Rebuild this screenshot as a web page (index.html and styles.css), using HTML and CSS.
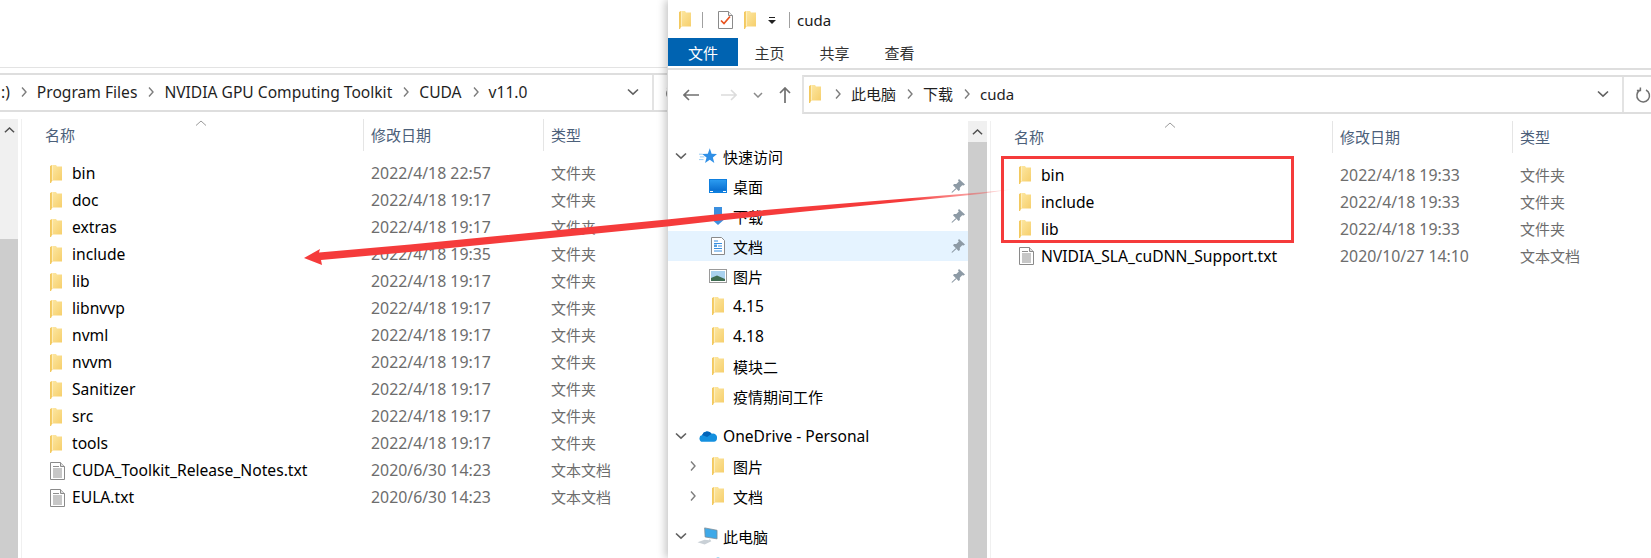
FILE: index.html
```html
<!DOCTYPE html>
<html lang="zh-CN">
<head>
<meta charset="utf-8">
<title>cuda</title>
<link rel="stylesheet" href="styles.css">
</head>
<body>
<svg class="sprite" aria-hidden="true">
  <defs>
    <linearGradient id="fg" x1="0" y1="0" x2="1" y2="1"><stop offset="0" stop-color="#fde8a4"/><stop offset="1" stop-color="#f6cf6c"/></linearGradient>
    <linearGradient id="sky" x1="0" y1="0" x2="0" y2="1"><stop offset="0" stop-color="#2b9bf0"/><stop offset="1" stop-color="#0a6fd0"/></linearGradient>
    <symbol id="folder" viewBox="0 0 12 18">
      <path d="M1.500 0H6L7 1.500H12V15.500H1.500Z" fill="url(#fg)"/>
      <path d="M0 1L2.200 0V15.500L1 18H0Z" fill="#f3c95f"/>
      <path d="M2.400 .2V15.300" stroke="#fff5d0" stroke-width=".8"/>
    </symbol>
    <symbol id="txt" viewBox="0 0 15 18">
      <path d="M.5.5H10.500L14.500 4.500V17.500H.5Z" fill="#fff" stroke="#8a8a8a"/>
      <path d="M10.500.5V4.500H14.500" fill="#ddd" stroke="#8a8a8a"/>
      <path d="M3 4.500H9M3 7H12M3 9H12M3 11H12M3 13H12M3 15H12" stroke="#8f8f8f"/>
    </symbol>
    <symbol id="chev-r" viewBox="0 0 8 12"><path d="M2 1.500L6 6L2 10.500" fill="none" stroke="#7d7d7d" stroke-width="1.400"/></symbol>
    <symbol id="chev-d" viewBox="0 0 12 8"><path d="M1 1.500L6 6.200L11 1.500" fill="none" stroke="#606060" stroke-width="1.600"/></symbol>
    <symbol id="chev-u" viewBox="0 0 12 8"><path d="M1 6.500L6 1.800L11 6.500" fill="none" stroke="#505050" stroke-width="1.600"/></symbol>
    <symbol id="refresh" viewBox="0 0 16 16"><path d="M5 3.200A6.300 6.300 0 1 0 11 3M5.400 .6V3.600H1.900" fill="none" stroke="#707070" stroke-width="1.500"/></symbol>
    <symbol id="pin" viewBox="0 0 14 14"><path d="M8 0L14 5.500L12.600 6.600L11.200 6.200L8.800 8.800L8.900 11L7.600 12L2 6.200L3.100 5L5.300 5L7.800 2.600L7 1.200ZM4.600 9.200L5.400 10L1.200 13.800L.4 13.200Z" fill="#8d9aa5"/></symbol>
  </defs>
</svg>

<main class="stage">
  <section class="win win-left">
    <div class="top-blank"></div>
    <div class="address">
      <div class="crumbs crumbs-cut">
        <span class="lat">:)</span><svg class="chev"><use href="#chev-r"/></svg>
        <span class="lat">Program Files</span><svg class="chev"><use href="#chev-r"/></svg>
        <span class="lat">NVIDIA GPU Computing Toolkit</span><svg class="chev"><use href="#chev-r"/></svg>
        <span class="lat">CUDA</span><svg class="chev"><use href="#chev-r"/></svg>
        <span class="lat">v11.0</span>
        <svg class="drop"><use href="#chev-d"/></svg>
      </div>
      <div class="refresh refresh-cut"><svg class="refresh-ic"><use href="#refresh"/></svg></div>
    </div>
    <div class="body body-left">
      <div class="scroll scroll-left"><div class="scroll-head scroll-head-left"><svg class="sc-up"><use href="#chev-u"/></svg></div><div class="thumb"></div></div>
      <div class="list">
        <div class="head"><div class="hc hc-name">名称<svg class="sort" viewBox="0 0 12 6"><path d="M1 5.500L6 1L11 5.500" fill="none" stroke="#9a9a9a"/></svg></div><div class="hc">修改日期</div><div class="hc">类型</div></div>
        <div class="row"><div class="name"><svg class="ic-folder"><use href="#folder"/></svg>bin</div><div class="meta">2022/4/18 22:57</div><div class="meta">文件夹</div></div>
        <div class="row"><div class="name"><svg class="ic-folder"><use href="#folder"/></svg>doc</div><div class="meta">2022/4/18 19:17</div><div class="meta">文件夹</div></div>
        <div class="row"><div class="name"><svg class="ic-folder"><use href="#folder"/></svg>extras</div><div class="meta">2022/4/18 19:17</div><div class="meta">文件夹</div></div>
        <div class="row"><div class="name"><svg class="ic-folder"><use href="#folder"/></svg>include</div><div class="meta">2022/4/18 19:35</div><div class="meta">文件夹</div></div>
        <div class="row"><div class="name"><svg class="ic-folder"><use href="#folder"/></svg>lib</div><div class="meta">2022/4/18 19:17</div><div class="meta">文件夹</div></div>
        <div class="row"><div class="name"><svg class="ic-folder"><use href="#folder"/></svg>libnvvp</div><div class="meta">2022/4/18 19:17</div><div class="meta">文件夹</div></div>
        <div class="row"><div class="name"><svg class="ic-folder"><use href="#folder"/></svg>nvml</div><div class="meta">2022/4/18 19:17</div><div class="meta">文件夹</div></div>
        <div class="row"><div class="name"><svg class="ic-folder"><use href="#folder"/></svg>nvvm</div><div class="meta">2022/4/18 19:17</div><div class="meta">文件夹</div></div>
        <div class="row"><div class="name"><svg class="ic-folder"><use href="#folder"/></svg>Sanitizer</div><div class="meta">2022/4/18 19:17</div><div class="meta">文件夹</div></div>
        <div class="row"><div class="name"><svg class="ic-folder"><use href="#folder"/></svg>src</div><div class="meta">2022/4/18 19:17</div><div class="meta">文件夹</div></div>
        <div class="row"><div class="name"><svg class="ic-folder"><use href="#folder"/></svg>tools</div><div class="meta">2022/4/18 19:17</div><div class="meta">文件夹</div></div>
        <div class="row"><div class="name"><svg class="ic-txt"><use href="#txt"/></svg>CUDA_Toolkit_Release_Notes.txt</div><div class="meta">2020/6/30 14:23</div><div class="meta">文本文档</div></div>
        <div class="row"><div class="name"><svg class="ic-txt"><use href="#txt"/></svg>EULA.txt</div><div class="meta">2020/6/30 14:23</div><div class="meta">文本文档</div></div>
      </div>
    </div>
  </section>

  <section class="win win-right">
    <header class="titlebar">
      <svg class="ic-folder t-first"><use href="#folder"/></svg>
      <i class="t-sep t-sep1"></i>
      <svg class="t-check" viewBox="0 0 15 18"><path d="M.5.5H10.500L14.500 4.500V17.500H.5Z" fill="#fff" stroke="#8a8a8a"/><path d="M10.500.5V4.500H14.500" fill="#eee" stroke="#8a8a8a"/><path d="M3 9.500L6 12.500L12 5.500" fill="none" stroke="#e8531f" stroke-width="1.700"/></svg>
      <svg class="ic-folder t-folder2"><use href="#folder"/></svg>
      <svg class="t-drop" viewBox="0 0 8 7"><path d="M1 0H7V1H1ZM0 3H8L4 7Z" fill="#222"/></svg>
      <i class="t-sep t-sep2"></i>
      <span class="t-name">cuda</span>
    </header>
    <nav class="tabs"><span class="tab tab-file">文件</span><span class="tab">主页</span><span class="tab">共享</span><span class="tab">查看</span></nav>
    <div class="addr-row">
      <div class="btns">
        <svg class="btn-back" viewBox="0 0 16 12"><path d="M6 1L1 6L6 11M1 6H16" fill="none" stroke="#707070" stroke-width="1.600"/></svg>
        <svg class="btn-fwd" viewBox="0 0 16 12"><path d="M10 1L15 6L10 11M15 6H0" fill="none" stroke="#dcdcdc" stroke-width="1.600"/></svg>
        <svg class="btn-down" viewBox="0 0 10 6"><path d="M1 1L5 5L9 1" fill="none" stroke="#8a8a8a" stroke-width="1.500"/></svg>
        <svg class="btn-up" viewBox="0 0 12 16"><path d="M1 6L6 1L11 6M6 1V16" fill="none" stroke="#707070" stroke-width="1.700"/></svg>
      </div>
      <div class="address address-right">
        <div class="crumbs">
          <svg class="ic-folder crumb-folder"><use href="#folder"/></svg><svg class="chev"><use href="#chev-r"/></svg>
          <span>此电脑</span><svg class="chev"><use href="#chev-r"/></svg>
          <span>下载</span><svg class="chev"><use href="#chev-r"/></svg>
          <span>cuda</span>
          <svg class="drop"><use href="#chev-d"/></svg>
        </div>
        <div class="refresh"><svg class="refresh-ic"><use href="#refresh"/></svg></div>
      </div>
    </div>
    <div class="body body-right">
      <aside class="navpane">
        <div class="navlist">
          <div class="nv nv-top"><svg class="exp"><use href="#chev-d"/></svg><svg class="ic-star" viewBox="0 0 20 18"><path d="M12 .5L14 6.400L20 6.700L15.400 10.700L17 16.800L12 13.300L6.700 16.800L8.400 10.700L3.500 6.700L9.800 6.400Z" fill="#2f8fe6"/><path d="M0 7H4M1 10H6M0 13H5" stroke="#8cc6f3"/></svg><span>快速访问</span></div>
          <div class="nv nv-sub"><i class="noexp"></i><svg class="ic-nav" viewBox="0 0 18 14"><rect width="18" height="14" fill="#0f7fde"/><rect x="1" y="1" width="16" height="10.500" fill="url(#sky)"/><path d="M1 12.500H4M14 12.500H17" stroke="#fff"/></svg><span>桌面</span><svg class="pin"><use href="#pin"/></svg></div>
          <div class="nv nv-sub"><i class="noexp"></i><svg class="ic-nav" viewBox="0 0 18 18"><path d="M5 0H13V10H18L9 18L0 10H5Z" fill="#3b8fdf"/></svg><span>下载</span><svg class="pin"><use href="#pin"/></svg></div>
          <div class="nv nv-sub nv-sel"><i class="noexp"></i><svg class="ic-nav" viewBox="0 0 18 18"><path d="M2.500.5H12.500L15.500 3.500V17.500H2.500Z" fill="#fff" stroke="#8a8a8a"/><path d="M5 4H9M5 6.500H13M9 9H13M5 11.500H13M5 14H13" stroke="#3b8fdf"/><path d="M5 7.500H8V10H5Z" fill="#56a0e0"/></svg><span>文档</span><svg class="pin"><use href="#pin"/></svg></div>
          <div class="nv nv-sub"><i class="noexp"></i><svg class="ic-nav" viewBox="0 0 18 14"><rect x=".5" y=".5" width="17" height="13" fill="#fff" stroke="#9a9a9a"/><rect x="2" y="2" width="14" height="10" fill="#a9d1ee"/><path d="M2 9L8 6.500L16 10V12H2Z" fill="#3f6d52"/></svg><span>图片</span><svg class="pin"><use href="#pin"/></svg></div>
          <div class="nv nv-sub"><i class="noexp"></i><svg class="ic-nav-folder"><use href="#folder"/></svg><span class="lat">4.15</span></div>
          <div class="nv nv-sub"><i class="noexp"></i><svg class="ic-nav-folder"><use href="#folder"/></svg><span class="lat">4.18</span></div>
          <div class="nv nv-sub"><i class="noexp"></i><svg class="ic-nav-folder"><use href="#folder"/></svg><span>模块二</span></div>
          <div class="nv nv-sub"><i class="noexp"></i><svg class="ic-nav-folder"><use href="#folder"/></svg><span>疫情期间工作</span></div>
          <div class="nv nv-top nv-group"><svg class="exp"><use href="#chev-d"/></svg><svg class="ic-star" viewBox="0 0 20 14"><path d="M4 13.500A3.800 3.800 0 0 1 3.500 6A6 6 0 0 1 14 4.500A4.500 4.500 0 0 1 20 9.500A4 4 0 0 1 16.500 13.500Z" fill="#1490df"/><path d="M3.500 6A6 6 0 0 1 14 4.500L9 8L3.500 6Z" fill="#0364b8"/></svg><span class="lat">OneDrive - Personal</span></div>
          <div class="nv nv-sub"><svg class="exp-r"><use href="#chev-r"/></svg><svg class="ic-nav-folder"><use href="#folder"/></svg><span>图片</span></div>
          <div class="nv nv-sub"><svg class="exp-r"><use href="#chev-r"/></svg><svg class="ic-nav-folder"><use href="#folder"/></svg><span>文档</span></div>
          <div class="nv nv-top nv-group"><svg class="exp"><use href="#chev-d"/></svg><svg class="ic-pc" viewBox="0 0 22 18"><path d="M8 .5L21 3V12L8.500 10Z" fill="#3fa9e8" stroke="#7a8a95" stroke-width=".8"/><path d="M13 11.500V13.500L8 13L.5 15.500L8 17.800L15 14.500" fill="#c9d0d6"/></svg><span>此电脑</span></div>
          <div class="nv nv-sub"><i class="noexp"></i><svg class="ic-nav" viewBox="0 0 18 18"><path d="M9 0L15 3L9 6L3 3Z" fill="#8fd0f2"/></svg></div>
        </div>
        <div class="scroll scroll-right"><div class="scroll-head"><svg class="sc-up"><use href="#chev-u"/></svg></div><div class="thumb"></div></div>
      </aside>
      <div class="list list-right">
        <div class="head"><div class="hc hc-name">名称<svg class="sort" viewBox="0 0 12 6"><path d="M1 5.500L6 1L11 5.500" fill="none" stroke="#9a9a9a"/></svg></div><div class="hc">修改日期</div><div class="hc">类型</div></div>
        <div class="row"><div class="name"><svg class="ic-folder"><use href="#folder"/></svg>bin</div><div class="meta">2022/4/18 19:33</div><div class="meta">文件夹</div></div>
        <div class="row"><div class="name"><svg class="ic-folder"><use href="#folder"/></svg>include</div><div class="meta">2022/4/18 19:33</div><div class="meta">文件夹</div></div>
        <div class="row"><div class="name"><svg class="ic-folder"><use href="#folder"/></svg>lib</div><div class="meta">2022/4/18 19:33</div><div class="meta">文件夹</div></div>
        <div class="row"><div class="name"><svg class="ic-txt"><use href="#txt"/></svg>NVIDIA_SLA_cuDNN_Support.txt</div><div class="meta">2020/10/27 14:10</div><div class="meta">文本文档</div></div>
      </div>
    </div>
  </section>

  <div class="red-box"></div>
  <svg class="arrow" viewBox="0 0 1651 558" aria-hidden="true">
    <defs><linearGradient id="fade" gradientUnits="userSpaceOnUse" x1="304" y1="0" x2="1015" y2="0"><stop offset="0" stop-color="#f53b3b"/><stop offset=".85" stop-color="#f53b3b"/><stop offset=".96" stop-color="#f53b3b" stop-opacity=".35"/><stop offset="1" stop-color="#f53b3b" stop-opacity="0"/></linearGradient></defs>
    <polygon points="304,258 320,249 319,252.500 410,244.500 667,219.500 720,214 800,207 900,199 980,192.500 1015,189 980,194 900,202 800,212 720,220.500 667,226.500 410,252 321,260 322,265" fill="url(#fade)"/>
  </svg>
</main>
</body>
</html>
```
FILE: styles.css
```css
* { box-sizing: border-box; }
html, body { margin: 0; padding: 0; background: #fff; }
body {
  font-family: "Noto Sans", "Noto Sans CJK SC", sans-serif;
  font-size: 15px;
  color: #000;
}
.lat { font-size: 15.6px; }
.sprite { position: absolute; width: 0; height: 0; }
svg { display: block; flex: none; }
i { display: block; flex: none; }

.stage { position: relative; width: 1651px; height: 558px; overflow: hidden; background: #fff; }
.win { position: absolute; top: 0; height: 558px; background: #fff; overflow: hidden; }
.win-left { left: 0; width: 667px; }
.win-right { left: 668px; width: 983px; overflow: visible; box-shadow: -3px 0 8px rgba(0,0,0,.22); }

/* left window */
.top-blank { height: 73px; background: linear-gradient(#fff 67px, #e3e3e3 67px, #e3e3e3 68px, #fff 68px); }

/* address */
.address { display: flex; height: 39px; border-top: 2px solid #dedede; border-bottom: 2px solid #dedede; }
.crumbs { flex: 1; min-width: 0; display: flex; align-items: center; padding: 0 0 2px 5px; color: #1f1f1f; }
.crumbs-cut { padding-left: 1px; }
.chev { width: 8px; height: 12px; margin: 0 9px 0 10px; }
.drop { width: 12px; height: 8px; margin-left: auto; margin-right: 13px; }
.crumbs .crumb-folder { margin-right: 3px; }
.refresh { width: 29px; border-left: 2px solid #e3e3e3; padding-left: 11px; display: flex; align-items: center; overflow: hidden; }
.refresh-cut { width: 15px; }
.refresh-ic { width: 16px; height: 16px; }

/* shared body */
.body { display: flex; }
.body-left { margin-top: 7px; height: 447px; }
.body-right { margin-top: 7px; height: 437px; }

.scroll { display: flex; flex-direction: column; width: 19px; flex: none; }
.scroll-left { width: 18px; margin-right: 3px; }
.scroll-head { height: 21px; background: #f0f0f0; display: flex; justify-content: center; padding-top: 7px; }
.scroll-head-left { height: 120px; }
.thumb { flex: 1; background: #cdcdcd; }
.sc-up { width: 11px; height: 8px; }

/* file list */
.list { flex: 1; border-left: 1px solid #f0f0f0; padding-left: 23px; }
.head { display: grid; grid-template-columns: 318px 180px 1fr; height: 32px; margin-bottom: 8px; color: #4c607a; }
.hc { display: flex; align-items: center; border-left: 1px solid #e5e5e5; padding-left: 7px; padding-bottom: 1px; position: relative; }
.hc-name { border-left: 0; padding-left: 0; }
.sort { position: absolute; left: 150px; top: 1px; width: 12px; height: 6px; }
.row { display: grid; grid-template-columns: 318px 180px 1fr; height: 27px; align-items: center; }
.name { display: flex; align-items: center; padding-left: 5px; white-space: nowrap; font-size: 15.65px; }
.meta { padding-left: 8px; color: #6d6d6d; white-space: nowrap; }
.meta:nth-child(2) { font-size: 15.85px; }
.ic-folder { width: 12px; height: 18px; margin-right: 10px; }
.ic-txt { width: 15px; height: 18px; margin-right: 7px; }
.body-left .name svg { margin-top: 2px; }

/* right window chrome */
.titlebar { display: flex; align-items: center; height: 38px; padding-left: 11px; padding-top: 2px; }
.t-first { margin-right: 0; }
.t-sep { width: 1px; height: 16px; background: #a0a0a0; }
.t-sep1 { margin-left: 11px; }
.t-check { width: 15px; height: 18px; margin-left: 15px; }
.t-folder2 { margin-left: 11px; margin-right: 0; }
.t-drop { width: 8px; height: 7px; margin-left: 12px; }
.t-sep2 { margin-left: 13px; }
.t-name { margin-left: 7px; color: #1a1a1a; }

.tabs { display: flex; height: 32px; border-bottom: 2px solid #dedede; align-items: flex-start; color: #333; }
.tab { width: 65px; height: 28px; padding-top: 1px; line-height: 28px; text-align: center; }
.tab-file { width: 70px; margin-right: -1px; background: #0063b1; color: #fff; }

.addr-row { display: flex; margin-top: 5px; }
.btns { width: 134px; display: flex; align-items: center; padding-left: 4px; flex: none; }
.btn-back { width: 16px; height: 12px; margin: 0 11px 0 11px; }
.btn-fwd { width: 16px; height: 12px; margin: 0 11px; }
.btn-down { width: 10px; height: 6px; margin: 0 5px; }
.btn-up { width: 12px; height: 16px; margin-left: 11px; }
.address-right { flex: 1; border-left: 2px solid #e3e3e3; }

/* nav pane */
.navpane { display: flex; width: 320px; flex: none; }
.navlist { width: 300px; flex: none; padding-top: 20px; }
.nv { display: flex; align-items: center; height: 30px; white-space: nowrap; }
.nv-top { padding-left: 5px; }
.nv-sub { padding-left: 17px; }
.nv-group { margin-top: 10px; }
.nv-sel { background: #e5f3ff; }
.exp { width: 12px; height: 8px; margin: 0 2px; }
.exp-r { width: 8px; height: 12px; margin: 0 4px; }
.noexp { width: 16px; }
.ic-star { width: 18px; height: 18px; margin: 0 6px 0 10px; }
.ic-pc { width: 21px; height: 18px; margin: 0 5px 0 8px; }
.ic-nav { width: 18px; height: 18px; margin: 0 6px 0 8px; }
.ic-nav-folder { width: 12px; height: 18px; margin: 0 9px 0 11px; }
.pin { width: 14px; height: 14px; margin-left: auto; margin-right: 3px; }

.list-right { margin-left: 2px; }

/* annotations */
.red-box { position: absolute; left: 1001px; top: 156px; width: 293px; height: 87px; border: 3px solid #f53b3b; }
.arrow { position: absolute; left: 0; top: 0; width: 1651px; height: 558px; pointer-events: none; }
```
